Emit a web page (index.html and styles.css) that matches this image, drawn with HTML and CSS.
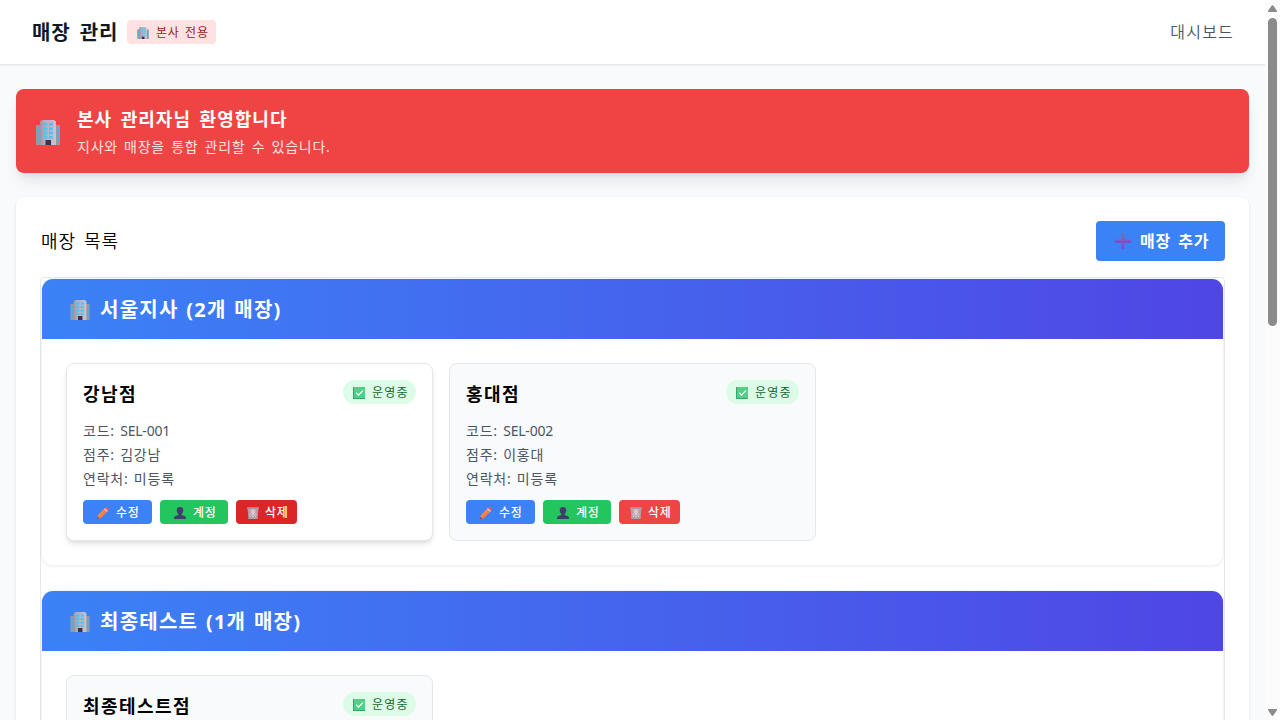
FILE: index.html
```html
<!DOCTYPE html>
<html lang="ko">
<head>
<meta charset="utf-8">
<title>매장 관리</title>
<link rel="stylesheet" href="styles.css">
</head>
<body>
<svg class="sprite" width="0" height="0" aria-hidden="true">
  <defs>
    <linearGradient id="tower" x1="0" x2="1" y1="0" y2="0"><stop offset="0" stop-color="#9a94a0"/><stop offset=".3" stop-color="#b3b0b8"/><stop offset="1" stop-color="#c9c4d0"/></linearGradient>
    <linearGradient id="pencilBody" x1="0" x2="1" y1="0" y2="1"><stop offset="0" stop-color="#ffa04d"/><stop offset="1" stop-color="#f4603a"/></linearGradient>
    <linearGradient id="plusBody" x1="0" x2="0" y1="0" y2="1"><stop offset="0" stop-color="#7d6ba8"/><stop offset="1" stop-color="#8447d3"/></linearGradient>
    <symbol id="building" viewBox="0 0 24 25">
      <path d="M0 5h6v20H0zM18 5h6v20h-6z" fill="#9b96a3"/>
      <path d="M4 1.500L6 0h12l2 1.500V25H4z" fill="url(#tower)"/>
      <path d="M1.200 8.500H3.500v3H1.200zM1.200 13H3.500v3H1.200zM1.200 17.500H3.500v3H1.200zM20.800 8.500h2.200v3h-2.200zM20.800 13h2.200v3h-2.200zM20.800 17.500h2.200v3h-2.200z" fill="#3bb5ef"/>
      <path d="M7.500 2.800h3.800v3H7.500zM13 2.800h3.800v3H13zM7.500 7.200h3.800v3H7.500zM13 7.200h3.800v3H13zM7.500 11.600h3.800v3H7.500zM13 11.600h3.800v3H13zM7.500 16h3.800v2.700H7.500zM13 16h3.800v2.700H13z" fill="#4fc3f7"/>
      <path d="M9.500 20h5.500v5H9.500z" fill="#40304d"/>
    </symbol>
    <symbol id="check" viewBox="0 0 12 12">
      <path d="M0 0h12v12H0z" fill="#4fd087"/>
      <path d="M0 0h1v11h11v1H0z" fill="#38a372"/>
      <path d="M3.200 5.800l2.300 2.300L10 3.500" fill="none" stroke="#fff" stroke-width="1.300"/>
    </symbol>
    <symbol id="pencil" viewBox="0 0 12 12">
      <path d="M0 12l1-4 7-7 3 3-7 7z" fill="url(#pencilBody)"/>
      <path d="M7.600 1.400L9 .2c1-.5 3 1.300 2.800 2.600L10.500 4.300z" fill="#ef5a62"/>
      <path d="M7 2l3 3 .8-.9-2.900-2.900z" fill="#d9cbd6"/>
      <path d="M0 12l.6-2.300 1.700 1.700z" fill="#644b60"/>
    </symbol>
    <symbol id="person" viewBox="0 0 12 12">
      <path d="M6 0c2.200 0 3.300 1.300 3.300 3.300C9.300 5 8.500 6.200 7.700 6.900V8l3.300 1.200c.7.300 1 1.200 1 2.800H0c0-1.600.3-2.500 1-2.800L4.300 8V6.900C3.500 6.200 2.700 5 2.700 3.300 2.700 1.300 3.800 0 6 0z" fill="#433b6b"/>
    </symbol>
    <symbol id="trash" viewBox="0 0 12 12">
      <path d="M.5 1.500h11L10.500 12h-9z" fill="#b6a6b2" fill-opacity=".9"/>
      <path d="M3 3l6 7M9 3l-6 7M4.500 2l5 6M7.500 2l-5 6M6 2v9" stroke="#e9dfe7" stroke-width=".7"/>
      <path d="M0 .3h12v1.500H0zM1.500 10.800h9V12h-9z" fill="#aaa0ad"/>
    </symbol>
    <symbol id="plus" viewBox="0 0 16 16">
      <path d="M6.500 0h3v6.500H16v3H9.500V16h-3V9.500H0v-3h6.500z" fill="url(#plusBody)"/>
      <path d="M0 9h6.500M9.500 9H16" stroke="#843ad0"/>
    </symbol>
  </defs>
</svg>
<div class="page">
  <header class="topbar">
    <div class="brand">
      <h1 class="brand-title">매장 관리</h1>
      <span class="role"><svg class="icon-sm"><use href="#building"/></svg>본사 전용</span>
    </div>
    <a class="nav-link">대시보드</a>
  </header>
  <main class="main">
    <section class="banner">
      <svg class="icon-lg"><use href="#building"/></svg>
      <div>
        <h2 class="banner-title">본사 관리자님 환영합니다</h2>
        <p class="banner-text">지사와 매장을 통합 관리할 수 있습니다.</p>
      </div>
    </section>
    <section class="panel">
      <div class="panel-head">
        <h3 class="panel-title">매장 목록</h3>
        <button class="add"><svg class="icon-plus"><use href="#plus"/></svg><span>매장 추가</span></button>
      </div>
      <div class="list">
        <article class="branch">
          <h4 class="branch-head"><svg class="icon-md"><use href="#building"/></svg><span>서울지사 (2개 매장)</span></h4>
          <div class="stores">
            <div class="store store-active">
              <div class="store-head"><h5 class="store-name">강남점</h5><span class="status"><svg class="icon-sm"><use href="#check"/></svg>운영중</span></div>
              <div class="details"><p>코드: <span class="code">SEL-001</span></p><p>점주: 김강남</p><p>연락처: 미등록</p></div>
              <div class="actions">
                <button class="btn btn-edit"><svg class="icon-sm"><use href="#pencil"/></svg>수정</button>
                <button class="btn btn-account"><svg class="icon-sm"><use href="#person"/></svg>계정</button>
                <button class="btn btn-delete btn-delete-hover"><svg class="icon-sm"><use href="#trash"/></svg>삭제</button>
              </div>
            </div>
            <div class="store">
              <div class="store-head"><h5 class="store-name">홍대점</h5><span class="status"><svg class="icon-sm"><use href="#check"/></svg>운영중</span></div>
              <div class="details"><p>코드: <span class="code">SEL-002</span></p><p>점주: 이홍대</p><p>연락처: 미등록</p></div>
              <div class="actions">
                <button class="btn btn-edit"><svg class="icon-sm"><use href="#pencil"/></svg>수정</button>
                <button class="btn btn-account"><svg class="icon-sm"><use href="#person"/></svg>계정</button>
                <button class="btn btn-delete"><svg class="icon-sm"><use href="#trash"/></svg>삭제</button>
              </div>
            </div>
          </div>
        </article>
        <article class="branch">
          <h4 class="branch-head"><svg class="icon-md"><use href="#building"/></svg><span>최종테스트 (1개 매장)</span></h4>
          <div class="stores">
            <div class="store">
              <div class="store-head"><h5 class="store-name">최종테스트점</h5><span class="status"><svg class="icon-sm"><use href="#check"/></svg>운영중</span></div>
            </div>
          </div>
        </article>
      </div>
    </section>
  </main>
</div>
<div class="scrollbar" aria-hidden="true">
  <svg class="arrow" viewBox="0 0 9 7"><path d="M0 7V6L3.500.8Q4.500-.4 5.500.8L9 6v1z" fill="#8b8b8b"/></svg>
  <div class="thumb"></div>
  <svg class="arrow arrow-down" viewBox="0 0 9 7"><path d="M0 0v1l3.500 5.200q1 1.200 2 0L9 1V0z" fill="#8b8b8b"/></svg>
</div>
</body>
</html>
```
FILE: styles.css
```css
* { box-sizing: border-box; margin: 0; padding: 0; }
body {
  display: flex;
  height: 720px;
  overflow: hidden;
  background: #f9fafb;
  color: #000;
  font-family: "Noto Sans", "Noto Sans CJK KR", sans-serif;
  font-size: 16px;
  line-height: 24px;
}
button { border: 0; font-family: inherit; }
svg { display: block; flex: none; }
span, h1, h2, h3, h5, p, a { white-space: nowrap; }
.sprite { position: absolute; }
.page { width: 1265px; height: 720px; overflow: hidden; flex: none; }
.icon-sm { width: 12px; height: 12px; }
.icon-md { width: 20px; height: 20px; }
.icon-lg { width: 24px; height: 25px; margin-top: 3px; }
.icon-plus { width: 16px; height: 16px; }

.topbar {
  display: flex; align-items: center; justify-content: space-between;
  height: 65px; padding: 0 31px 0 32px;
  background: #fff; border-bottom: 1px solid #e5e7eb;
  box-shadow: 0 1px 2px rgba(0,0,0,.05);
}
.brand { display: flex; align-items: center; }
.brand-title { width: 95px; padding-top: 1px; font-size: 20px; line-height: 28px; font-weight: 700; color: #111827; letter-spacing: .9px; word-spacing: 3px; }
.role {
  display: flex; align-items: center; gap: 7px;
  width: 89px; height: 24px; padding: 2px 0 0 10px;
  border-radius: 4px; background: #fee2e2; color: #991b1b;
  font-size: 12px; line-height: 16px; letter-spacing: .8px; word-spacing: 1.500px;
}
.nav-link { color: #4b5563; font-weight: 350; letter-spacing: 1.200px; }

.main { padding: 24px 16px 0; }
.banner {
  display: flex; align-items: center; gap: 17px;
  height: 84px; padding: 0 20px; margin-bottom: 24px;
  border-radius: 8px; background: #ef4444; color: #fff;
  box-shadow: 0 10px 15px -3px rgba(0,0,0,.1), 0 4px 6px -4px rgba(0,0,0,.1);
}
.banner-title { font-size: 18px; line-height: 28px; font-weight: 700; letter-spacing: 1.050px; word-spacing: 2.700px; }
.banner-text { padding-top: 4px; font-size: 14px; line-height: 20px; color: #fee2e2; letter-spacing: .75px; word-spacing: 1.800px; }
.panel {
  height: 700px; padding: 24px; border-radius: 8px; background: #fff;
  box-shadow: 0 1px 3px rgba(0,0,0,.1), 0 1px 2px -1px rgba(0,0,0,.1);
}
.panel-head { display: flex; justify-content: space-between; align-items: center; margin-bottom: 16px; }
.panel-title { padding-left: 1px; font-size: 18px; line-height: 28px; font-weight: 350; letter-spacing: .9px; word-spacing: 2.500px; }
.add {
  display: flex; align-items: center; gap: 9px; width: 129px; height: 40px; padding: 0 0 1px 19px;
  border-radius: 4px; background: #3b82f6; color: #fff;
  font-size: 16px; line-height: 22px; font-weight: 700; letter-spacing: .8px; word-spacing: 2.200px;
}
.list { height: 700px; border: 1px solid #e5e7eb; border-radius: 4px; }
.branch {
  margin-bottom: 24px; overflow: hidden;
  border: 1px solid #f3f4f6; border-radius: 12px; background: #fff;
  box-shadow: 0 1px 2px rgba(0,0,0,.05);
}
.branch-head {
  display: flex; align-items: center; gap: 10px; height: 60px; padding: 2px 0 0 28px;
  background: linear-gradient(to right, #3b82f6, #4f46e5); color: #fff;
  font-size: 20px; line-height: 28px; font-weight: 700; letter-spacing: 1.250px; word-spacing: 1.200px;
}
.stores { display: grid; grid-template-columns: repeat(3, 1fr); gap: 16px; padding: 24px; }
.store { height: 178px; padding: 16px; border: 1px solid #e5e7eb; border-radius: 8px; background: #f9fafb; }
.store-active { background: #fff; box-shadow: 0 4px 6px -1px rgba(0,0,0,.1), 0 2px 4px -2px rgba(0,0,0,.1); }
.store-head { display: flex; justify-content: space-between; align-items: flex-start; margin-bottom: 12px; }
.store-name { font-size: 18px; line-height: 28px; font-weight: 700; letter-spacing: 1.450px; }
.status {
  display: flex; align-items: center; gap: 7px; width: 73px; height: 24px; padding: 2px 0 0 10px;
  border-radius: 12px; background: #dcfce7; color: #166534; font-size: 12px; line-height: 16px; letter-spacing: 1.200px;
}
.details { display: flex; flex-direction: column; gap: 4px; padding-top: 1px; font-size: 14px; line-height: 20px; color: #4b5563; letter-spacing: .8px; word-spacing: .8px; }
.code { letter-spacing: -.2px; }
.actions { display: flex; gap: 8px; margin-top: 11px; }
.btn {
  display: flex; align-items: center; gap: 7px; height: 24px; padding-top: 2px; border-radius: 4px; color: #fff;
  font-size: 12px; line-height: 16px; font-weight: 500; letter-spacing: .7px; white-space: nowrap;
}
.btn-edit { width: 69px; padding-left: 14px; background: #3b82f6; }
.btn-account { width: 68px; padding-left: 14px; background: #22c55e; }
.btn-delete { width: 61px; padding-left: 11px; gap: 6px; background: #ef4444; }
.btn-delete-hover { background: #dc2626; }

.scrollbar { display: flex; flex-direction: column; align-items: center; width: 15px; height: 720px; padding: 5px 0 4px; background: #fcfcfc; }
.arrow { width: 9px; height: 7px; }
.thumb { width: 9px; height: 308px; margin-top: 6px; border-radius: 5px; background: #8b8b8b; }
.arrow-down { margin-top: auto; }
```
